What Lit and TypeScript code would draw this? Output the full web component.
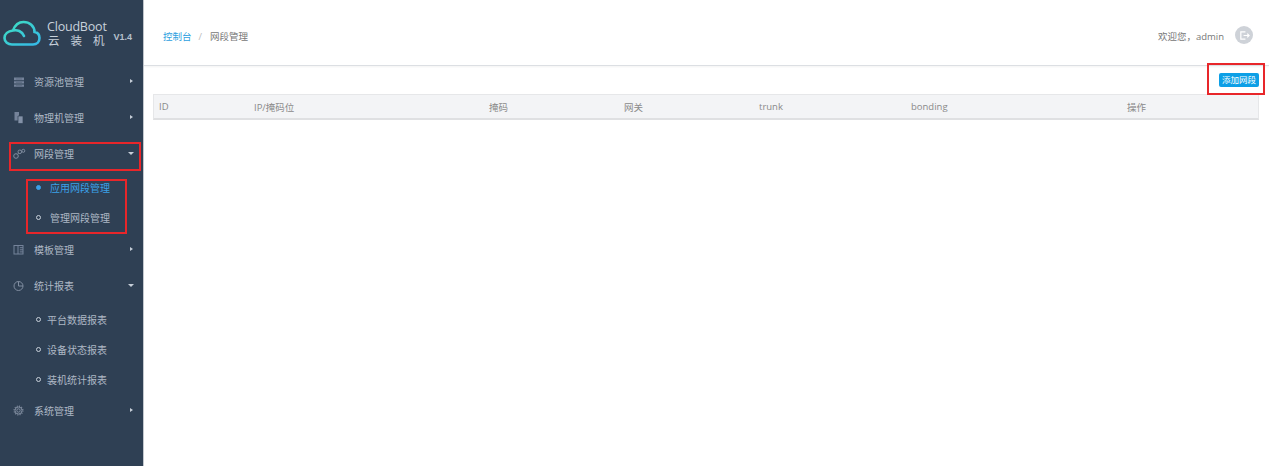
import { LitElement, html, css, svg } from "lit";
import { customElement } from "lit/decorators.js";

const ICONS: Record<string, unknown> = {
  pool: svg`<path d="M1 1.500h10v2.800H1zM1 5.200h10v2.400H1zM1 8.500h10v2.300H1z" fill="#75839a"/><path d="M3 3h6M3 6.400h6M3 9.600h6" stroke="#56657b" stroke-width=".7"/>`,
  server: svg`<path d="M1.500 0h4.500v8.500H1.500z" fill="#75839a"/><path d="M5 4h5v7.500H5z" fill="#8391a7" stroke="#2f4054" stroke-width=".7"/>`,
  net: svg`<g fill="none" stroke="#808da0" stroke-width="1"><circle cx="3" cy="8" r="2.300"/><circle cx="6.800" cy="3.800" r="1.800"/><circle cx="10.300" cy="2.800" r="1.500"/><path d="M4.500 6.300l1-1"/></g>`,
  tpl: svg`<g fill="none" stroke="#75839a" stroke-width="1"><rect x="1" y="1.500" width="9" height="8.500"/><path d="M5 1.500v8.500M6.800 3.700h3.200M6.800 5.800h3.200M6.800 7.900h3.200"/></g>`,
  chart: svg`<g fill="none" stroke="#808da0" stroke-width="1"><circle cx="5.500" cy="6" r="4.500"/><path d="M5.500 1.500v4.500h4.500"/></g>`,
  gear: svg`<g fill="none" stroke="#808da0"><circle cx="5.500" cy="5.500" r="1.700" stroke-width="1"/><circle cx="5.500" cy="5.500" r="3.500" stroke-width="1"/><circle cx="5.500" cy="5.500" r="4.400" stroke-width="1.200" stroke-dasharray="1.100 1.200"/></g>`,
};

type Item = { icon: string; label: string; open?: boolean; subs?: { label: string; active?: boolean }[] };

const MENU: Item[] = [
  { icon: "pool", label: "资源池管理" },
  { icon: "server", label: "物理机管理" },
  { icon: "net", label: "网段管理", open: true, subs: [{ label: "应用网段管理", active: true }, { label: "管理网段管理" }] },
  { icon: "tpl", label: "模板管理" },
  { icon: "chart", label: "统计报表", open: true, subs: [{ label: "平台数据报表" }, { label: "设备状态报表" }, { label: "装机统计报表" }] },
  { icon: "gear", label: "系统管理" },
];

const COLS: { label: string; width: number }[] = [
  { label: "ID", width: 95 },
  { label: "IP/掩码位", width: 235 },
  { label: "掩码", width: 135 },
  { label: "网关", width: 135 },
  { label: "trunk", width: 152 },
  { label: "bonding", width: 216 },
  { label: "操作", width: 132 },
];

@customElement("app-root")
export class AppRoot extends LitElement {
  static styles = css`
    :host {
      display: block;
      width: 1269px;
      height: 466px;
      overflow: hidden;
      position: relative;
      font-family: "Open Sans", "Noto Sans CJK SC", sans-serif;
      font-size: 10px;
      color: #777;
      background: #fff;
    }
    .shell { display: flex; height: 466px; }
    .side { width: 144px; flex: none; background: #2f4054; color: #aeb8c5; border-right: 1px solid #c3c8ce; box-sizing: border-box; }
    .logo { height: 63px; display: flex; align-items: center; padding-left: 3px; box-sizing: border-box; color: #c9d2dc; }
    .logo svg { width: 38px; height: 26px; flex: none; margin-top: 3px; }
    .brand { margin-left: 6px; display: flex; flex-direction: column; margin-top: 5px; }
    .brand .en { font-size: 12.500px; line-height: 14px; letter-spacing: -0.2px; }
    .brand .cn { font-size: 11.500px; line-height: 14px; letter-spacing: 11px; white-space: nowrap; padding-left: 1px; }
    .ver { font-size: 9px; font-weight: 700; margin-left: -2px; margin-top: 11px; font-family: "Liberation Sans", sans-serif; color: #b6c0cc; }
    .item { height: 36px; display: flex; align-items: center; padding-left: 13px; position: relative; }
    .item svg { width: 11px; height: 11px; flex: none; }
    .item .label { margin-left: 10px; }
    .caret { position: absolute; width: 0; height: 0; }
    .caret.right { left: 130px; top: 16px; border-left: 3px solid #c6ced8; border-top: 2.500px solid transparent; border-bottom: 2.500px solid transparent; }
    .caret.down { left: 128px; top: 17px; border-top: 3px solid #c6ced8; border-left: 3px solid transparent; border-right: 3px solid transparent; }
    .sub { height: 30px; display: flex; align-items: center; padding-left: 36px; position: relative; top: 1px; }
    .sub .dot { width: 5px; height: 5px; border-radius: 50%; box-sizing: border-box; border: 1.500px solid #c8d0da; flex: none; }
    .sub .label { margin-left: 9px; }
    .sub.short .label { margin-left: 6px; }
    .sub.short:nth-last-child(2) { margin-bottom: -1px; }
    .sub.active { color: #3ba0e8; }
    .sub.active .dot { background: #3ba0e8; border-color: #3ba0e8; }
    .main { flex: 1; min-width: 0; display: flex; flex-direction: column; }
    .top { height: 66px; flex: none; box-sizing: border-box; border-bottom: 1px solid #dcdfe3; box-shadow: 0 1px 2px rgba(0,0,0,.05); display: flex; align-items: center; padding: 7px 16px 0 19px; font-size: 9.500px; }
    .crumb { color: #2d9fe0; }
    .slash { color: #bbb; margin: 0 8px 0 7px; }
    .grow { flex: 1; }
    .user { color: #777; font-size: 9.500px; }
    .avatar { width: 18px; height: 18px; border-radius: 50%; background: #ced2d8; margin-left: 11px; margin-top: -2px; display: flex; align-items: center; justify-content: center; }
    .avatar svg { width: 11px; height: 11px; }
    .body { padding: 7px 10px 0 9px; }
    .actions { display: flex; justify-content: flex-end; height: 15px; }
    .btn { background: #0d9fe6; color: #fff; border-radius: 2px; height: 14px; width: 40px; font-size: 8.500px; display: flex; align-items: center; justify-content: center; line-height: 1; }
    .thead { margin-top: 6px; height: 26px; width: 1106px; box-sizing: border-box; display: flex; align-items: center; background: #f3f4f6; border: 1px solid #e6e7e9; border-bottom: 2px solid #dfe0e2; color: #8a8a8a; font-size: 9.500px; }
    .th { padding-left: 5px; box-sizing: border-box; flex: none; }
    .mark { position: absolute; border: 2px solid #e8262a; box-sizing: border-box; pointer-events: none; }
    .m1 { left: 9px; top: 142px; width: 132px; height: 29px; }
    .m2 { left: 26px; top: 179px; width: 101px; height: 55px; }
    .m3 { left: 1207px; top: 63px; width: 58px; height: 32px; }
  `;

  render() {
    return html`
      <div class="shell">
        <nav class="side">
          <div class="logo">
            <svg viewBox="0 0 38 26" fill="none">
              <defs>
                <linearGradient id="g" x1="0" y1="0" x2="1" y2="1">
                  <stop offset="0" stop-color="#3fe0c0" />
                  <stop offset="1" stop-color="#35b8e8" />
                </linearGradient>
              </defs>
              <path d="M21 16C19 11 14 9.500 10 10.500C5 11 1.500 14 1.500 18C1.500 22 5 24.500 9 24.500H30C34 24.500 36.500 21.500 36.500 18C36.500 15 34.500 12.500 31.500 12C31.500 6 26.500 2 20.500 2C16 2 12 5 10 10.500" stroke="url(#g)" stroke-width="2.600" stroke-linecap="round" />
            </svg>
            <div class="brand"><span class="en">CloudBoot</span><span class="cn">云装机</span></div>
            <span class="ver">V1.4</span>
          </div>
          ${MENU.map(
            (m) => html`
              <div class="item">
                <svg viewBox="0 0 11 11" overflow="visible">${ICONS[m.icon]}</svg>
                <span class="label">${m.label}</span>
                <span class="caret ${m.open ? "down" : "right"}"></span>
              </div>
              ${(m.subs ?? []).map(
                (s) => html`<div class="sub ${s.active ? "active" : ""} ${m.icon === "chart" ? "short" : ""}">
                  <span class="dot"></span><span class="label">${s.label}</span>
                </div>`
              )}
            `
          )}
        </nav>
        <main class="main">
          <header class="top">
            <span class="crumb">控制台</span><span class="slash">/</span><span>网段管理</span>
            <span class="grow"></span>
            <span class="user">欢迎您，admin</span>
            <span class="avatar">
              <svg viewBox="0 0 12 12" fill="none" stroke="#fff" stroke-width="1.300">
                <path d="M7 2H2v8h5" /><path d="M5 6h6M9 4l2 2-2 2" />
              </svg>
            </span>
          </header>
          <section class="body">
            <div class="actions"><span class="btn">添加网段</span></div>
            <div class="thead">
              ${COLS.map((c) => html`<span class="th" style="width:${c.width}px">${c.label}</span>`)}
            </div>
          </section>
        </main>
      </div>
      <div class="mark m1"></div>
      <div class="mark m2"></div>
      <div class="mark m3"></div>
    `;
  }
}
